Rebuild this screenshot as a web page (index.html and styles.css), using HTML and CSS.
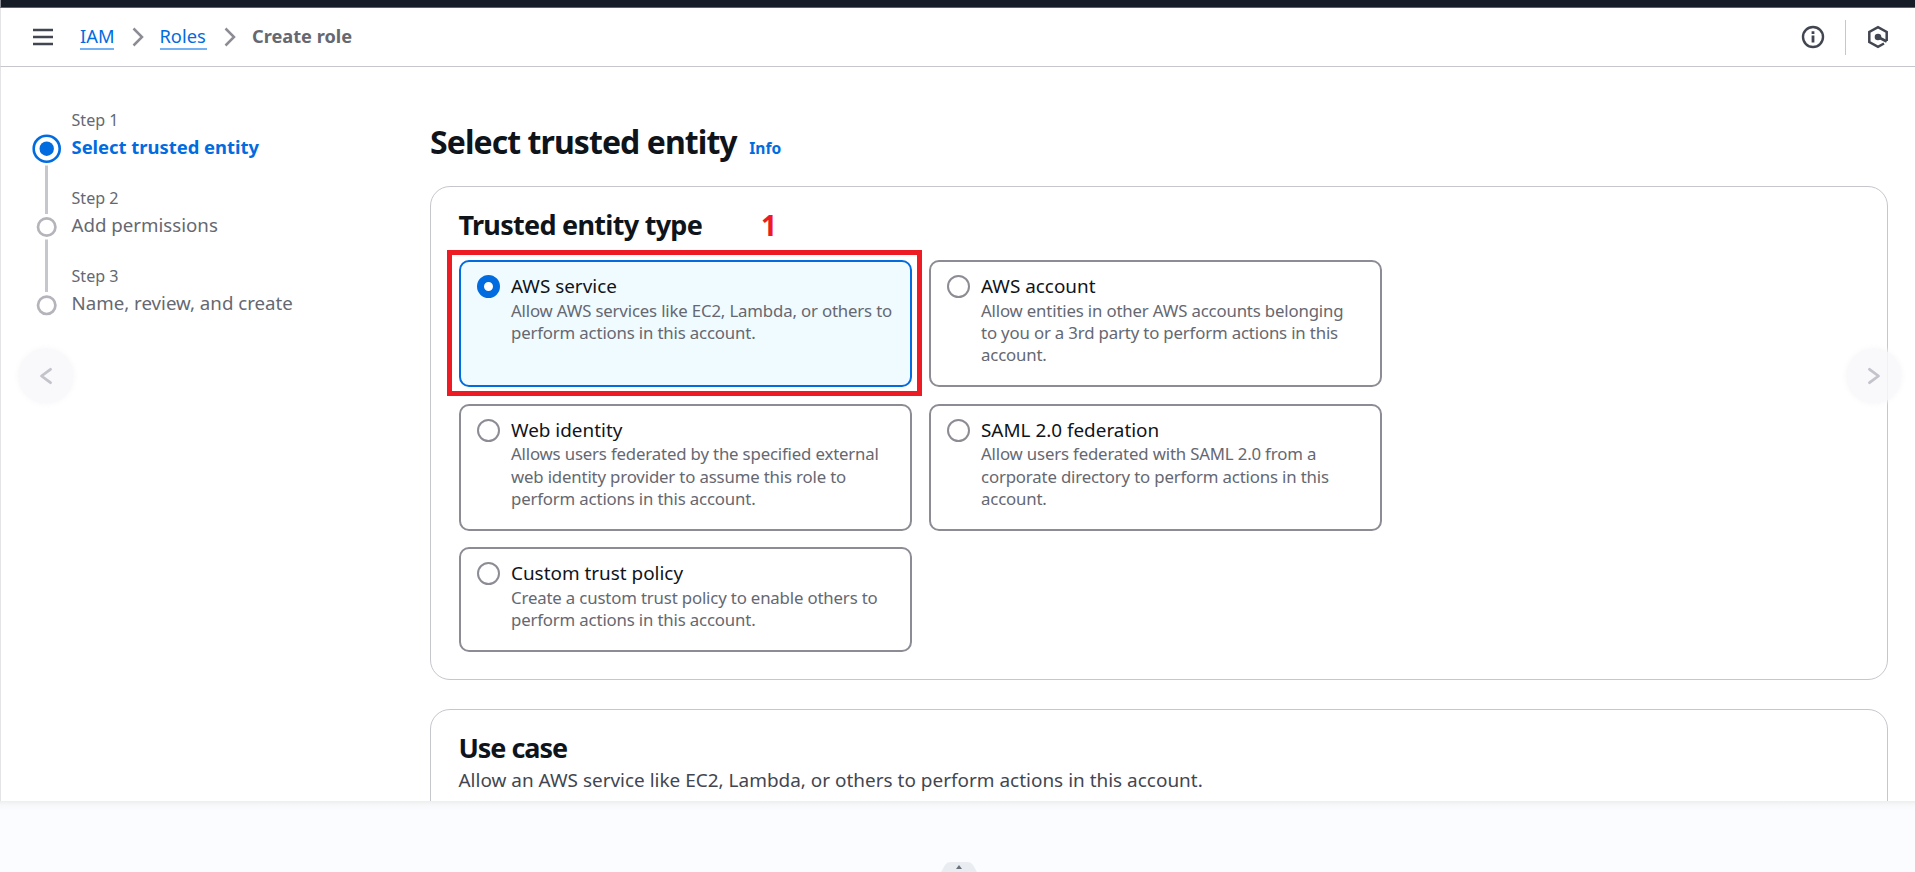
FILE: index.html
```html
<!DOCTYPE html>
<html lang="en">
<head>
<meta charset="utf-8">
<title>Create role | IAM</title>
<link rel="stylesheet" href="styles.css">
</head>
<body>
<div class="app">
  <div class="topbar"></div>
  <header class="header">
    <svg class="menu" width="20" height="18" viewBox="0 0 20 18"><path d="M0 2h20M0 9h20M0 16h20" stroke="#424650" stroke-width="2.5"/></svg>
    <nav class="crumbs">
      <a class="crumb iam">IAM</a>
      <svg class="sep" width="12" height="20" viewBox="0 0 12 20"><path d="M1.5 1.5L10 10L1.5 18.5" fill="none" stroke="#8c8c94" stroke-width="2.5"/></svg>
      <a class="crumb roles">Roles</a>
      <svg class="sep" width="12" height="20" viewBox="0 0 12 20"><path d="M1.5 1.5L10 10L1.5 18.5" fill="none" stroke="#8c8c94" stroke-width="2.5"/></svg>
      <span class="current">Create role</span>
    </nav>
    <div class="tools">
      <svg width="24" height="24" viewBox="0 0 24 24"><circle cx="12" cy="12" r="10" fill="none" stroke="#424650" stroke-width="2.4"/><path d="M12 10.5v7M12 6.3v2.6" stroke="#424650" stroke-width="2.8"/></svg>
      <span class="divider"></span>
      <svg width="24" height="24" viewBox="0 0 24 24"><path d="M20.700 16V7L12 2.200L3.300 7V17L12 21.800L18 18.500" fill="none" stroke="#424650" stroke-width="2.500"/><circle cx="12" cy="12" r="3.300" fill="#424650"/><path d="M12 12L20.700 16.500" stroke="#424650" stroke-width="2.700"/></svg>
    </div>
  </header>
  <main class="main">
    <aside class="steps">
      <svg class="rail" width="30" height="184" viewBox="0 0 30 184">
        <path d="M14.500 33.500V82M14.500 107.500V160" stroke="#c6c6cd" stroke-width="3"/>
        <circle cx="14.700" cy="16.700" r="13" fill="#fff" stroke="#006ce0" stroke-width="2.600"/>
        <circle cx="14.700" cy="16.700" r="7.200" fill="#006ce0"/>
        <circle cx="14.700" cy="95" r="8.700" fill="#fff" stroke="#b4b4bb" stroke-width="2.700"/>
        <circle cx="14.700" cy="173.300" r="8.700" fill="#fff" stroke="#b4b4bb" stroke-width="2.700"/>
      </svg>
      <div class="step-list">
        <div class="step active"><div class="step-no">Step 1</div><div class="step-name">Select trusted entity</div></div>
        <div class="step"><div class="step-no">Step 2</div><div class="step-name">Add permissions</div></div>
        <div class="step"><div class="step-no">Step 3</div><div class="step-name">Name, review, and create</div></div>
      </div>
    </aside>
    <section class="content">
      <div class="title"><h1>Select trusted entity</h1><a class="info">Info</a></div>
      <div class="panel">
        <div class="panel-head"><h2>Trusted entity type</h2><span class="marker">1</span></div>
        <div class="options">
          <div class="option selected">
            <span class="radio"></span>
            <div><div class="name">AWS service</div><div class="desc">Allow AWS services like EC2, Lambda, or others to<br>perform actions in this account.</div></div>
            <span class="highlight"></span>
          </div>
          <div class="option">
            <span class="radio"></span>
            <div><div class="name">AWS account</div><div class="desc">Allow entities in other AWS accounts belonging<br>to you or a 3rd party to perform actions in this<br>account.</div></div>
          </div>
          <div class="option">
            <span class="radio"></span>
            <div><div class="name">Web identity</div><div class="desc">Allows users federated by the specified external<br>web identity provider to assume this role to<br>perform actions in this account.</div></div>
          </div>
          <div class="option">
            <span class="radio"></span>
            <div><div class="name">SAML 2.0 federation</div><div class="desc">Allow users federated with SAML 2.0 from a<br>corporate directory to perform actions in this<br>account.</div></div>
          </div>
          <div class="option">
            <span class="radio"></span>
            <div><div class="name">Custom trust policy</div><div class="desc">Create a custom trust policy to enable others to<br>perform actions in this account.</div></div>
          </div>
        </div>
      </div>
      <div class="panel usecase">
        <h2 class="uc">Use case</h2>
        <p class="lead">Allow an AWS service like EC2, Lambda, or others to perform actions in this account.</p>
      </div>
    </section>
    <div class="pager prev"><svg width="14" height="18" viewBox="0 0 14 18"><path d="M11.500 2.300L2.500 9L11.500 15.700" fill="none" stroke="#c3c3cb" stroke-width="2.800" stroke-linecap="round" stroke-linejoin="round"/></svg></div>
    <div class="pager next"><svg width="14" height="18" viewBox="0 0 14 18"><path d="M2.500 2.300L11.500 9L2.500 15.700" fill="none" stroke="#c3c3cb" stroke-width="2.800" stroke-linecap="round" stroke-linejoin="round"/></svg></div>
  </main>
  <footer class="footer">
    <svg width="36" height="10" viewBox="0 0 36 10"><path d="M0 10L4 3Q6 0 9 0H27Q30 0 32 3L36 10Z" fill="#e9edf2"/><path d="M15 7L18 3L21 7Z" fill="#68717e"/></svg>
  </footer>
</div>
</body>
</html>
```
FILE: styles.css
```css
* { box-sizing: border-box; }
body { margin: 0; overflow: hidden; background: #fff; font-family: "Noto Sans", sans-serif; color: #0f141a; }
h1, h2, p { margin: 0; }
svg { display: block; flex: none; }
.app { height: 872px; display: flex; flex-direction: column; overflow: hidden; }
.topbar { height: 8px; background: #161d26; border-bottom: 1px solid #5d636b; border-left: 1px solid #8a8e94; flex: none; }
.header { height: 59px; flex: none; display: flex; align-items: center; padding: 0 25px 0 32px; border-left: 1px solid #e4e4e6; border-bottom: 1px solid #c6c6cd; }
.crumbs { display: flex; align-items: center; margin-left: 27px; font-size: 18.300px; line-height: 24px; }
.crumb { color: #006ce0; border-bottom: 2px solid #75b0f2; }
.iam { width: 34px; }
.roles { width: 47px; }
.sep { margin: 0 16px 0 17.500px; }
.current { font-weight: 700; font-size: 18.200px; color: #656871; padding-bottom: 2px; }
.tools { margin-left: auto; display: flex; align-items: center; gap: 20px; }
.divider { width: 1px; height: 35px; background: #c6c6cd; }

.main { position: relative; height: 734px; flex: none; display: flex; overflow: hidden; border-left: 1px solid #e4e4e6; }
.steps { display: flex; width: 429px; padding: 43px 0 0 31px; flex: none; }
.rail { margin-top: 22px; }
.step-list { margin-left: 9.500px; display: flex; flex-direction: column; gap: 29px; }
.step { color: #656871; }
.step-no { font-size: 16.100px; line-height: 20px; margin-bottom: 5px; }
.step-name { font-size: 18.700px; line-height: 24px; }
.active .step-name { font-weight: 700; font-size: 18.400px; color: #006ce0; }

.content { width: 1458px; flex: none; padding-top: 57px; }
.title { display: flex; align-items: baseline; line-height: 36px; height: 36px; }
h1 { font-size: 32px; line-height: 36px; font-weight: 700; letter-spacing: -.930px; }
.info { font-size: 15.600px; font-weight: 700; color: #006ce0; margin-left: 12.500px; }
.panel { margin-top: 26px; height: 494px; border: 1px solid #c6c6cd; border-radius: 20px; padding: 23px 28px 0 27.500px; }
.panel-head { display: flex; margin-bottom: 20px; }
h2 { font-size: 27px; line-height: 30px; font-weight: 700; letter-spacing: -.720px; }
.marker { font-size: 28px; line-height: 30px; font-weight: 700; color: #ed1c24; margin-left: 59px; }
.options { display: grid; grid-template-columns: 453px 453px; grid-template-rows: 127px 127px 105px; gap: 16.600px 17px; }
.option { position: relative; display: flex; border: 2px solid #8c8c94; border-radius: 10px; padding: 12px 0 0 16.500px; }
.selected { background: #f0fbff; border-color: #006ce0; }
.radio { width: 23px; height: 23px; margin: 1px 11px 0 0; border: 2.500px solid #8c8c94; border-radius: 50%; background: #fff; flex: none; }
.selected .radio { border: 7px solid #006ce0; }
.name { font-size: 18.900px; line-height: 24px; }
.desc { margin-top: 1.500px; font-size: 16.800px; letter-spacing: -.160px; line-height: 22.400px; color: #656871; white-space: nowrap; }
.highlight { position: absolute; left: -13.500px; top: -12px; width: 475px; height: 146px; border: 5px solid #ed1c24; }
.usecase { margin-top: 29px; }
.uc { letter-spacing: -1.050px; }
.lead { margin-top: 5px; font-size: 18.970px; line-height: 24px; color: #424650; }

.pager { position: absolute; top: 281px; width: 56px; height: 56px; border-radius: 50%; background: rgba(248, 248, 250, .85); box-shadow: 0 0 4px 1px rgba(248, 248, 250, .9); display: flex; align-items: center; justify-content: center; }
.prev { left: 17px; }
.next { right: 13px; }
.footer { flex: 1; background: linear-gradient(#eceef0, #f6f8fa 4px, #fafcff 10px); display: flex; align-items: flex-end; justify-content: center; padding-left: 3px; }
```
